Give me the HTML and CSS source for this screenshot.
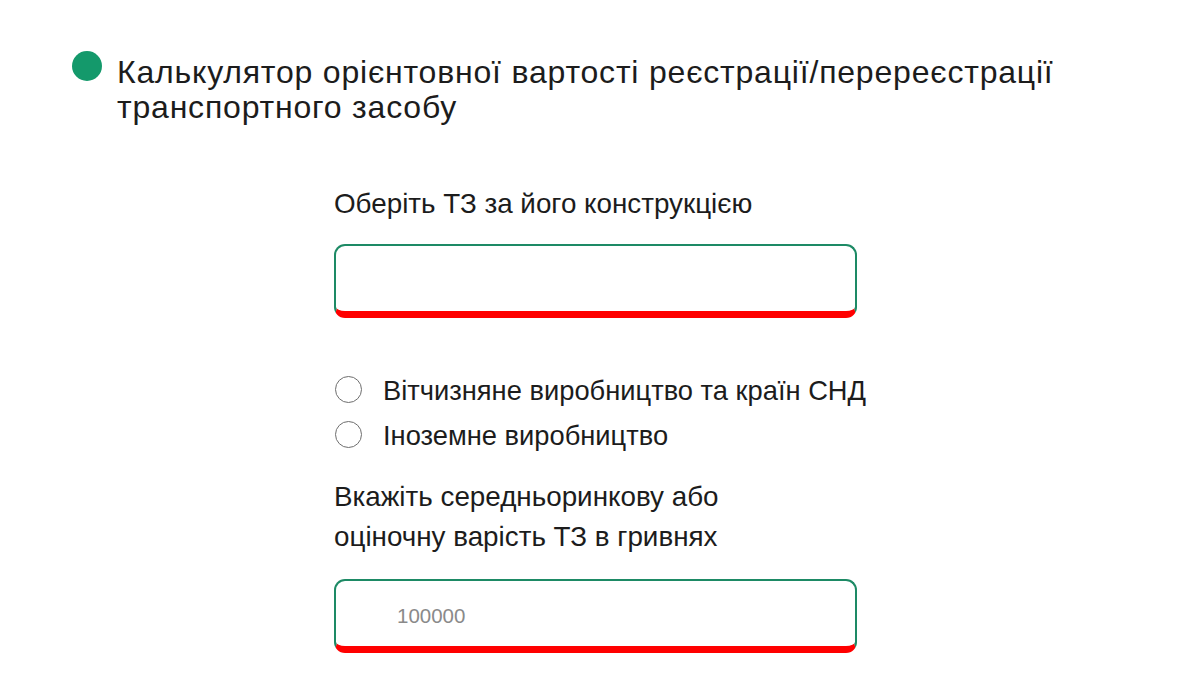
FILE: index.html
```html
<!DOCTYPE html>
<html lang="uk">
<head>
<meta charset="utf-8">
<title>Калькулятор</title>
<link rel="stylesheet" href="styles.css">
</head>
<body>
<div class="page">
  <header class="title">
    <span class="dot"></span>
    <h1>Калькулятор орієнтовної вартості реєстрації/перереєстрації<br>транспортного засобу</h1>
  </header>
  <form class="form">
    <label class="label label-type">Оберіть ТЗ за його конструкцією</label>
    <div class="field"></div>
    <div class="radios">
      <label class="radio"><span class="circle"></span><span class="radio-text">Вітчизняне виробництво та країн СНД</span></label>
      <label class="radio"><span class="circle"></span><span class="radio-text">Іноземне виробництво</span></label>
    </div>
    <label class="label label-price">Вкажіть середньоринкову або<br>оціночну варість ТЗ в гривнях</label>
    <div class="field field-price"><span class="placeholder">100000</span></div>
  </form>
</div>
</body>
</html>
```
FILE: styles.css
```css
html, body {
  margin: 0;
  padding: 0;
  background: #fff;
}
body {
  font-family: "Liberation Sans", Arial, sans-serif;
  color: #1c1c1c;
}
.page {
  width: 1200px;
  height: 700px;
  overflow: hidden;
}
.title {
  display: flex;
  align-items: flex-start;
  gap: 15px;
  padding: 51px 0 0 72px;
}
.dot {
  flex: none;
  width: 30px;
  height: 30px;
  border-radius: 50%;
  background: #14996b;
}
.title h1 {
  margin: 4px 0 0;
  font-size: 32px;
  letter-spacing: 0.8px;
  font-weight: 400;
  line-height: 35px;
}
.form {
  display: flex;
  flex-direction: column;
  width: 523px;
  margin: 0 0 0 334px;
}
.label {
  display: block;
  font-size: 27.8px;
  line-height: 40px;
  white-space: nowrap;
}
.label-type {
  margin-top: 59px;
}
.field {
  box-sizing: border-box;
  height: 74px;
  margin-top: 20px;
  border: 2.5px solid #1d8a65;
  border-bottom: 7px solid #f00;
  border-radius: 11px;
  display: flex;
  align-items: center;
  padding: 5px 0 0 61px;
}
.field-price {
  margin-top: 22px;
}
.placeholder {
  font-size: 20.5px;
  color: #8a8a8a;
}
.radios {
  display: flex;
  flex-direction: column;
  gap: 15px;
  margin-top: 56px;
}
.radio {
  display: flex;
  align-items: center;
  gap: 21px;
  font-size: 27.3px;
  line-height: 30px;
  white-space: nowrap;
}
.radio-text {
  position: relative;
  top: 2px;
}
.circle {
  flex: none;
  box-sizing: border-box;
  width: 27px;
  height: 27px;
  margin-left: 1px;
  border-radius: 50%;
  border: 1px solid #6e6e6e;
  background: #fff;
}
.label-price {
  margin-top: 28px;
}
```
